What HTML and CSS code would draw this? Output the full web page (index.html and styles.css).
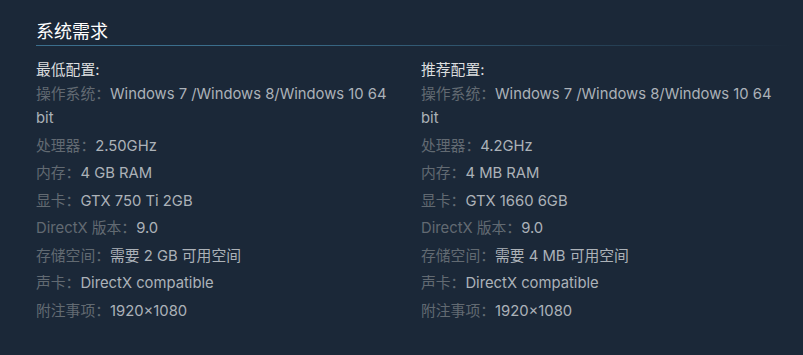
FILE: index.html
```html
<!DOCTYPE html>
<html lang="zh-CN">
<head>
<meta charset="utf-8">
<title>系统需求</title>
<link rel="stylesheet" href="styles.css">
</head>
<body>
<section class="sysreq">
  <h2 class="sysreq-title">系统需求</h2>
  <div class="sysreq-cols">
    <ul class="sysreq-list">
      <li class="sysreq-head">最低配置:</li>
      <li><span class="lbl">操作系统：</span>Windows 7 /Windows 8/Windows 10 64 bit</li>
      <li><span class="lbl">处理器：</span>2.50GHz</li>
      <li><span class="lbl">内存：</span>4 GB RAM</li>
      <li><span class="lbl">显卡：</span>GTX 750 Ti 2GB</li>
      <li><span class="lbl">DirectX 版本：</span>9.0</li>
      <li><span class="lbl">存储空间：</span>需要 2 GB 可用空间</li>
      <li><span class="lbl">声卡：</span>DirectX compatible</li>
      <li><span class="lbl">附注事项：</span>1920×1080</li>
    </ul>
    <ul class="sysreq-list">
      <li class="sysreq-head">推荐配置:</li>
      <li><span class="lbl">操作系统：</span>Windows 7 /Windows 8/Windows 10 64 bit</li>
      <li><span class="lbl">处理器：</span>4.2GHz</li>
      <li><span class="lbl">内存：</span>4 MB RAM</li>
      <li><span class="lbl">显卡：</span>GTX 1660 6GB</li>
      <li><span class="lbl">DirectX 版本：</span>9.0</li>
      <li><span class="lbl">存储空间：</span>需要 4 MB 可用空间</li>
      <li><span class="lbl">声卡：</span>DirectX compatible</li>
      <li><span class="lbl">附注事项：</span>1920×1080</li>
    </ul>
  </div>
</section>
</body>
</html>
```
FILE: styles.css
```css
html, body {
  margin: 0;
  padding: 0;
  background: #1b2838;
}
body {
  font-family: Inter, "Noto Sans CJK SC", sans-serif;
  color: #acb2b8;
}
.sysreq {
  width: 755px;
  margin-left: 36px;
  padding-top: 18px;
}
.sysreq-title {
  margin: 0;
  font-family: "Noto Sans CJK SC", sans-serif;
  font-weight: normal;
  font-size: 18px;
  line-height: 24px;
  color: #ffffff;
  padding-bottom: 3px;
  border-bottom: 1px solid transparent;
  background-image: linear-gradient(to right, #3b6e8c 0%, #3b6e8c 30%, rgba(59, 110, 140, 0) 100%);
  background-size: 100% 1px;
  background-position: left bottom;
  background-repeat: no-repeat;
  background-origin: border-box;
}
.sysreq-cols {
  display: grid;
  grid-template-columns: 370px 370px;
  column-gap: 15px;
  margin-top: 12px;
}
.sysreq-list {
  list-style: none;
  margin: 0;
  padding: 0;
  font-size: 14.8px;
  line-height: 24px;
}
.sysreq-list li {
  margin-bottom: 3.5px;
}
.sysreq-list li.sysreq-head {
  margin-bottom: 0;
  color: #dcdedf;
}
.lbl {
  color: #626a72;
}
```
